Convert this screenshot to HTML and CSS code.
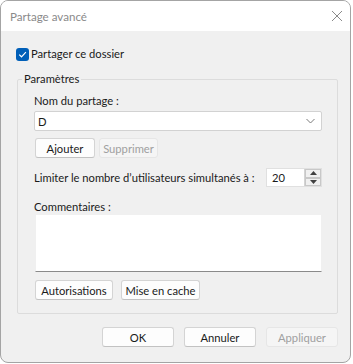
FILE: index.html
```html
<!DOCTYPE html>
<html>
<head>
  <title>Partage avancé</title>
  <meta name="viewport" content="width=device-width, initial-scale=1">
  <link rel="stylesheet" href="styles.css">
</head>
<body>
  <div class="window">
    <div class="titlebar">
      <span class="title">Partage avancé</span>
      <svg class="close" width="12" height="12" viewBox="0 0 12 12">
        <path d="M1 1 L11 11 M11 1 L1 11" stroke="#8a8a8a" stroke-width="1" fill="none"/>
      </svg>
    </div>
    <div class="content">
      <label class="check-row">
        <span class="checkbox">
          <svg width="9" height="9" viewBox="0 0 9 9"><path d="M1.2 4.6 L3.5 6.8 L7.9 2.2" stroke="#fff" stroke-width="1.2" fill="none"/></svg>
        </span>
        Partager ce dossier
      </label>

      <fieldset class="group">
        <legend>Paramètres</legend>
        <div class="label">Nom du partage :</div>
        <div class="combo">
          <span>D</span>
          <svg width="9" height="6" viewBox="0 0 9 6"><path d="M0.5 1 L4.5 5 L8.5 1" stroke="#7a7a7a" stroke-width="1" fill="none"/></svg>
        </div>
        <div class="btn-row tight">
          <button class="btn w60">Ajouter</button>
          <button class="btn w59" disabled>Supprimer</button>
        </div>
        <div class="limit-row">
          <span>Limiter le nombre d’utilisateurs simultanés à :</span>
          <div class="spin">
            <span class="spin-value">20</span>
            <div class="spin-buttons">
              <span class="spin-btn"><svg width="7" height="4" viewBox="0 0 7 4"><path d="M0 4 L3.5 0 L7 4 Z" fill="#404040"/></svg></span>
              <span class="spin-btn"><svg width="7" height="4" viewBox="0 0 7 4"><path d="M0 0 L3.5 4 L7 0 Z" fill="#404040"/></svg></span>
            </div>
          </div>
        </div>
        <div class="label comments">Commentaires :</div>
        <div class="textarea"></div>
        <div class="btn-row">
          <button class="btn w78">Autorisations</button>
          <button class="btn w79">Mise en cache</button>
        </div>
      </fieldset>

      <div class="footer">
        <button class="btn w72">OK</button>
        <button class="btn w72">Annuler</button>
        <button class="btn w72" disabled>Appliquer</button>
      </div>
    </div>
  </div>
</body>
</html>
```

FILE: styles.css
```css
body {
    margin: 0;
    background-color: #ffffff;
    font-family: Lato, "Noto Sans", sans-serif;
    font-size: 11.2px;
    color: #1a1a1a;
  }
.window {
    width: 351px;
    height: 363px;
    box-sizing: border-box;
    border: 1px solid #a4a4a4;
    border-radius: 8px;
    overflow: hidden;
    background-color: #f0f0f0;
    display: flex;
    flex-direction: column;
  }
.titlebar {
    height: 30px;
    flex: none;
    background-color: #ffffff;
    display: flex;
    align-items: center;
    justify-content: space-between;
    padding: 0 7px 0 9px;
  }
.title {
    color: #8a8a8a;
    font-size: 11.6px;
  }
.close {
    margin-top: -1px;
  }
.content {
    padding: 16px 0 0 15px;
  }
.check-row {
    display: flex;
    align-items: center;
    gap: 2px;
    height: 14px;
    line-height: 14px;
  }
.checkbox {
    width: 13px;
    height: 13px;
    border-radius: 3px;
    background-color: #005fb8;
    display: flex;
    align-items: center;
    justify-content: center;
  }
.group {
    width: 321px;
    min-width: 0;
    box-sizing: border-box;
    margin: 10px 0 0 1px;
    padding: 6px 15px 13px 16px;
    border: 1px solid #dcdcdc;
    border-radius: 2px;
  }
.group legend {
    margin-left: -12px;
    padding: 0 2px;
    line-height: 16px;
  }
.label {
    line-height: 16px;
  }
.combo {
    margin-top: 2px;
    height: 20px;
    box-sizing: border-box;
    background-color: #ffffff;
    border: 1px solid #d2d2d2;
    border-radius: 2px;
    display: flex;
    align-items: center;
    justify-content: space-between;
    padding: 0 6px 0 3px;
  }
.btn-row {
    display: flex;
    gap: 8px;
    margin-top: 8px;
    padding-left: 1px;
  }
.btn-row.tight {
    gap: 4px;
    margin-top: 7px;
  }
.btn {
    height: 20px;
    padding: 0;
    white-space: nowrap;
    font-family: inherit;
    font-size: inherit;
    color: #1a1a1a;
    background-color: #fdfdfd;
    border: 1px solid #d4d4d4;
    border-bottom-color: #c2c2c2;
    border-radius: 3px;
  }
.btn:disabled {
    color: #a0a0a0;
    background-color: #f5f5f5;
    border-color: #e6e6e6;
  }
.w59 { width: 59px; }
.w60 { width: 60px; }
.w72 { width: 72px; }
.w78 { width: 78px; }
.w79 { width: 79px; }
.limit-row {
    margin-top: 10px;
    display: flex;
    align-items: center;
    justify-content: space-between;
    white-space: nowrap;
  }
.spin {
    width: 56px;
    height: 19px;
    box-sizing: border-box;
    background-color: #ffffff;
    border: 1px solid #e0e0e0;
    display: flex;
    justify-content: space-between;
  }
.spin-value {
    padding-left: 5px;
    line-height: 17px;
  }
.spin-buttons {
    width: 16px;
    display: flex;
    flex-direction: column;
    border-left: 1px solid #d4d4d4;
  }
.spin-btn {
    flex: 1;
    display: flex;
    align-items: center;
    justify-content: center;
    background-color: #f0f0f0;
    border: 1px solid #c8c8c8;
  }
.comments {
    margin-top: 12px;
    line-height: 15px;
  }
.textarea {
    height: 58px;
    margin-left: 1px;
    box-sizing: border-box;
    background-color: #ffffff;
    border: 1px solid #f0f0f0;
    border-bottom: 1px solid #8a8a8a;
  }
.footer {
    display: flex;
    gap: 10px;
    margin: 13px 0 0 86px;
  }
```
